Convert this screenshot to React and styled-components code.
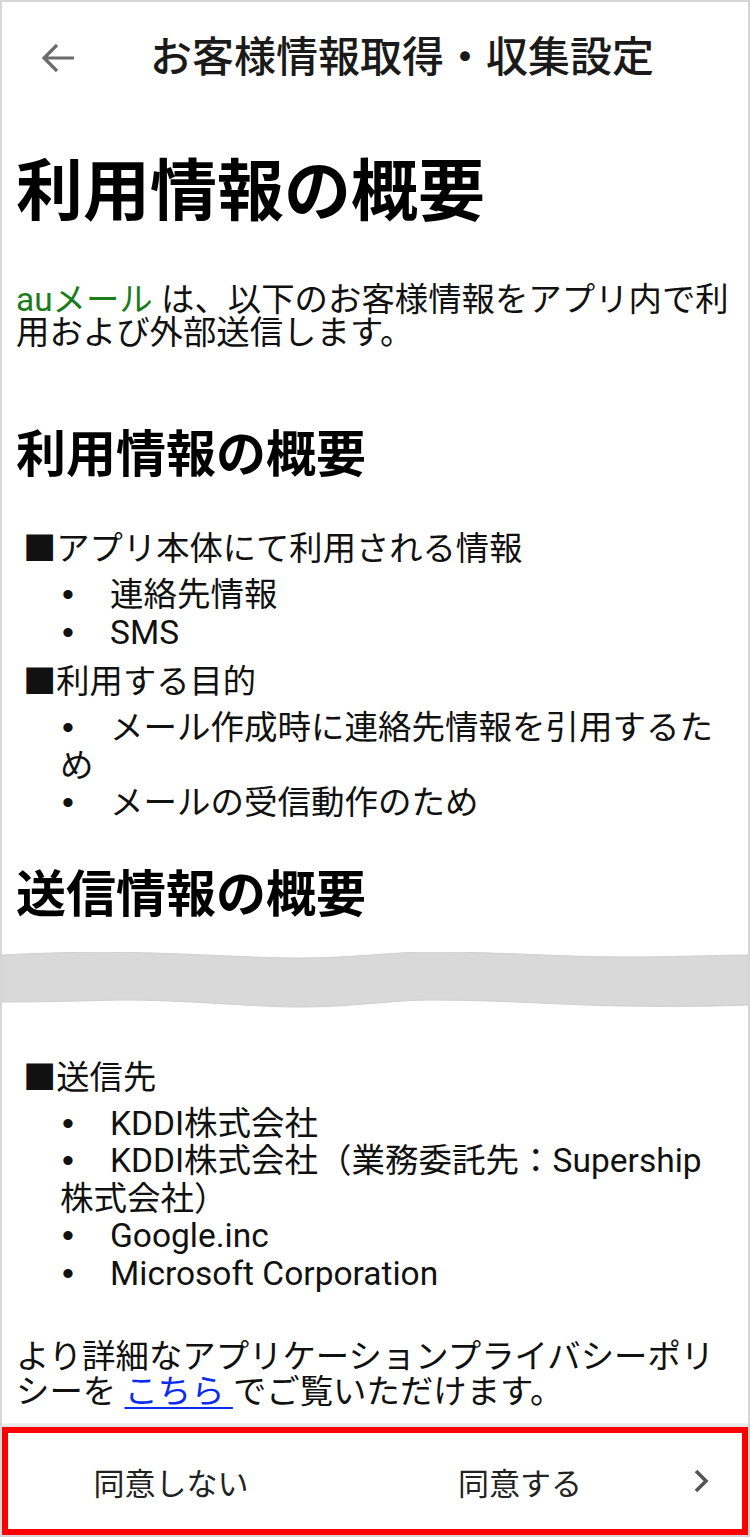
import React from "react";
import styled, { createGlobalStyle } from "styled-components";

const GlobalStyle = createGlobalStyle`
  html, body { margin: 0; padding: 0; background: #ffffff; }
  body { font-family: "Roboto", "Noto Sans CJK JP", sans-serif; color: #111111; }
  * { box-sizing: border-box; }
`;

const Frame = styled.div`
  width: 750px;
  height: 1537px;
  border: 2px solid #d6d6d6;
  display: flex;
  flex-direction: column;
  overflow: hidden;
  background: #fff;
`;

const Header = styled.header`
  height: 112px;
  flex: 0 0 auto;
  display: flex;
  align-items: center;
  padding-left: 36px;
`;

const BackButton = styled.button`
  width: 40px;
  height: 40px;
  padding: 0;
  border: none;
  background: none;
  display: flex;
  align-items: center;
  justify-content: center;
  color: #666;
`;

const Title = styled.h1`
  margin: 0 0 0 72px;
  font-size: 42px;
  font-weight: 500;
  line-height: 48px;
  color: #1a1a1a;
  white-space: nowrap;
`;

const Content = styled.main`
  flex: 1 1 auto;
  display: flex;
  flex-direction: column;
  padding: 0 16px 0 14px;
`;

const PageHeading = styled.h2`
  margin: 38px 0 0;
  font-size: 67px;
  font-weight: 700;
  line-height: 80px;
  color: #000;
`;

const Paragraph = styled.p`
  margin: ${(p) => p.$mt || 0}px 0 0;
  font-size: 33.4px;
  line-height: ${(p) => p.$lh || 34}px;
  color: #111;
`;

const AppName = styled.span`
  color: #1c7c1c;
`;

const SectionHeading = styled.h3`
  margin: ${(p) => p.$mt}px 0 0;
  font-size: 50px;
  font-weight: 700;
  line-height: 60px;
  color: #000;
`;

const GroupTitle = styled.div`
  font-size: 33.3px;
  line-height: 37.5px;
  margin-top: ${(p) => p.$mt || 0}px;
  margin-bottom: 8.5px;
  padding-left: 7px;
  color: #111;
`;

const List = styled.ul`
  list-style: none;
  margin: 0;
  padding: 0 0 0 44px;
`;

const Item = styled.li`
  font-size: 33.5px;
  line-height: 37.5px;
  color: #111;
`;

const Bullet = styled.span`
  display: inline-block;
  width: 50px;
  padding-left: 2px;
  font-family: "Liberation Sans", "DejaVu Sans", sans-serif;
  font-size: 34px;
`;

const Wave = styled.svg`
  display: block;
  width: 746px;
  height: 56px;
  margin: 27px 0 0 -14px;
  flex: 0 0 auto;
`;

const Link = styled.a`
  color: #0a2bf0;
  text-decoration: underline;
  text-decoration-thickness: 2px;
  text-underline-offset: 4px;
`;

const Divider = styled.div`
  flex: 0 0 auto;
  height: 4px;
  background: linear-gradient(#f2f2f2, #e2e2e2);
  margin-top: 14px;
`;

const Footer = styled.footer`
  flex: 0 0 108px;
  border: 6px solid #ff0000;
  display: flex;
  align-items: center;
`;

const FooterButton = styled.button`
  border: none;
  background: none;
  padding: 0;
  height: 100%;
  font-family: "Roboto", "Noto Sans CJK JP", sans-serif;
  font-size: 31px;
  color: #222;
  display: flex;
  align-items: center;
`;

const DeclineButton = styled(FooterButton)`
  flex: 0 0 326px;
  justify-content: center;
`;

const AgreeButton = styled(FooterButton)`
  flex: 1 1 auto;
  padding-left: 124px;
  padding-right: 30px;
  justify-content: space-between;
`;

const usedItems = ["連絡先情報", "SMS"];
const purposeItems = ["メール作成時に連絡先情報を引用するため", "メールの受信動作のため"];
const recipients = [
  "KDDI株式会社",
  "KDDI株式会社（業務委託先：Supership株式会社）",
  "Google.inc",
  "Microsoft Corporation",
];

function BulletList({ items }) {
  return (
    <List>
      {items.map((t) => (
        <Item key={t}>
          <Bullet>•</Bullet>
          {t}
        </Item>
      ))}
    </List>
  );
}

export default function App() {
  return (
    <>
      <GlobalStyle />
      <Frame>
        <Header>
          <BackButton aria-label="戻る">
            <svg width="36" height="36" viewBox="0 0 36 36" fill="none">
              <path d="M34 18H6M17 5L4 18l13 13" stroke="#6b6b6b" strokeWidth="3.2" />
            </svg>
          </BackButton>
          <Title>お客様情報取得・収集設定</Title>
        </Header>
        <Content>
          <PageHeading>利用情報の概要</PageHeading>
          <Paragraph $mt={51} $lh={33}>
            <AppName>auメール</AppName> は、以下のお客様情報をアプリ内で利用および外部送信します。
          </Paragraph>

          <SectionHeading $mt={76}>利用情報の概要</SectionHeading>
          <GroupTitle $mt={45}>■アプリ本体にて利用される情報</GroupTitle>
          <BulletList items={usedItems} />
          <GroupTitle $mt={12}>■利用する目的</GroupTitle>
          <BulletList items={purposeItems} />

          <SectionHeading $mt={43}>送信情報の概要</SectionHeading>

          <Wave viewBox="0 0 746 56" preserveAspectRatio="none">
            <path
              d="M0,3 C60,0 100,0 130,0.5 C200,2 250,6 300,6 C350,6 390,0 430,0 C500,0 560,5 620,5 C680,5 720,3 746,3 L746,53 C720,54 680,55 620,54 C560,53 500,48 430,48 C390,48 350,55 300,55 C250,55 200,49 130,48 C100,48 60,50 0,50 Z"
              fill="#d9d9d9"
              stroke="#cfcfcf"
              strokeWidth="1"
            />
          </Wave>

          <GroupTitle $mt={51}>■送信先</GroupTitle>
          <BulletList items={recipients} />

          <Paragraph $mt={47} $lh={35}>
            より詳細なアプリケーションプライバシーポリシーを <Link href="#">こちら </Link>でご覧いただけます。
          </Paragraph>
        </Content>
        <Divider />
        <Footer>
          <DeclineButton>同意しない</DeclineButton>
          <AgreeButton>
            <span>同意する</span>
            <svg width="20" height="28" viewBox="0 0 20 28" fill="none">
              <path d="M4 4l10 10-10 10" stroke="#555" strokeWidth="3.6" />
            </svg>
          </AgreeButton>
        </Footer>
      </Frame>
    </>
  );
}
